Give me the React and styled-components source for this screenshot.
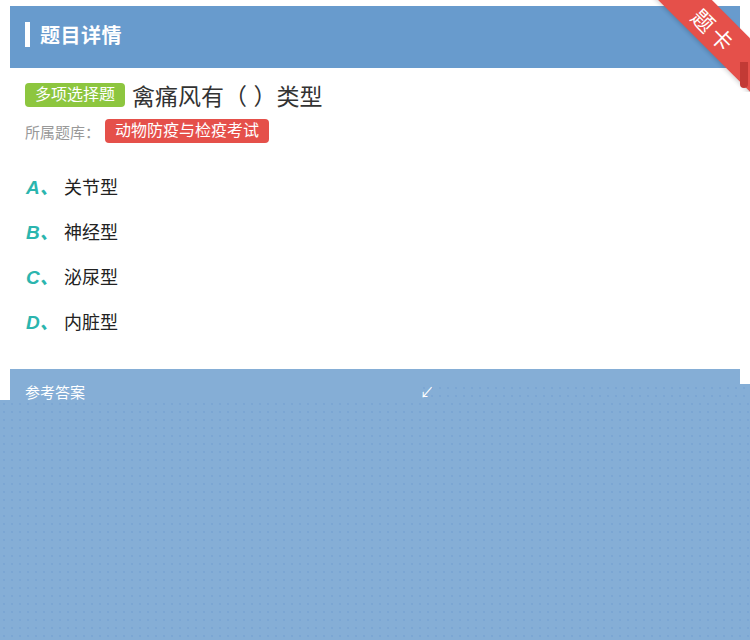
import React from 'react';
import styled, { createGlobalStyle } from 'styled-components';

const GlobalStyle = createGlobalStyle`
  html, body {
    margin: 0;
    padding: 0;
    background: #ffffff;
    font-family: "Liberation Sans", "Noto Sans CJK SC", sans-serif;
  }
`;

const Page = styled.div`
  position: relative;
  width: 750px;
  height: 640px;
  overflow: hidden;
  padding: 6px 10px 0;
  box-sizing: border-box;
`;

const Header = styled.div`
  height: 62px;
  background: #689bcd;
  display: flex;
  align-items: center;
  padding: 0 0 6px 15px;
  box-sizing: border-box;
  gap: 10px;
`;

const HeaderBar = styled.span`
  width: 5px;
  height: 25px;
  background: #ffffff;
`;

const HeaderTitle = styled.h2`
  margin: 0;
  color: #ffffff;
  font-size: 20px;
  font-weight: bold;
  letter-spacing: 0.5px;
`;

const Ribbon = styled.div`
  position: absolute;
  top: 0;
  right: 0;
  width: 100px;
  height: 92px;
  overflow: hidden;
  pointer-events: none;
`;

const RibbonBand = styled.div`
  position: absolute;
  left: -10px;
  top: 11px;
  width: 150px;
  height: 38px;
  background: #e5504a;
  transform: rotate(45deg);
  display: flex;
  align-items: center;
  justify-content: center;
  color: #ffffff;
  font-size: 22px;
  letter-spacing: 4px;
  box-shadow: 0 2px 4px rgba(0, 0, 0, 0.15);
`;

const RibbonFold = styled.div`
  position: absolute;
  right: 2px;
  top: 62px;
  width: 8px;
  height: 26px;
  background: #c23a35;
  border-radius: 0 0 4px 4px;
`;

const Body = styled.div`
  padding: 12px 15px 0;
`;

const QuestionRow = styled.div`
  display: flex;
  align-items: center;
  gap: 7px;
  height: 30px;
`;

const Tag = styled.span`
  display: inline-flex;
  align-items: center;
  height: 24px;
  padding: 0 10px;
  border-radius: 4px;
  background: ${p => p.$color};
  color: #ffffff;
  font-size: 16px;
  line-height: 24px;
`;

const QuestionText = styled.span`
  font-size: 23px;
  color: #333333;
`;

const BankRow = styled.div`
  display: flex;
  align-items: center;
  gap: 5px;
  margin-top: 9px;
  height: 24px;
  color: #999999;
  font-size: 15px;
`;

const Options = styled.ul`
  list-style: none;
  margin: 20px 0 0;
  padding: 0;
  display: flex;
  flex-direction: column;
`;

const Option = styled.li`
  display: flex;
  align-items: center;
  height: 45px;
  font-size: 18px;
  color: #222222;
`;

const Letter = styled.span`
  width: 38px;
  padding-left: 1px;
  color: #2bb5ae;
  font-weight: bold;
  font-style: italic;
  font-size: 19px;
`;

const AnswerBar = styled.div`
  margin-top: 26px;
  height: 60px;
  background: #85aed6;
  padding: 12px 15px;
  box-sizing: border-box;
  color: #ffffff;
  font-size: 15px;
`;

const Mask = styled.div`
  position: absolute;
  left: ${p => p.$left}px;
  top: ${p => p.$top}px;
  right: 0;
  bottom: 0;
  background-color: #85aed6;
  background-image: radial-gradient(circle, rgba(90, 140, 200, 0.22) 0.7px, transparent 1.1px);
  background-size: 8px 8px;
`;

const Mark = styled.span`
  position: absolute;
  left: 0;
  top: -3px;
  color: #ffffff;
  font-size: 14px;
`;

const options = [
  { key: 'A', text: '关节型' },
  { key: 'B', text: '神经型' },
  { key: 'C', text: '泌尿型' },
  { key: 'D', text: '内脏型' },
];

export default function App() {
  return (
    <>
      <GlobalStyle />
      <Page>
        <Header>
          <HeaderBar />
          <HeaderTitle>题目详情</HeaderTitle>
        </Header>
        <Body>
          <QuestionRow>
            <Tag $color="#8dc63f">多项选择题</Tag>
            <QuestionText>禽痛风有（ ）类型</QuestionText>
          </QuestionRow>
          <BankRow>
            <span>所属题库：</span>
            <Tag $color="#e5504a">动物防疫与检疫考试</Tag>
          </BankRow>
          <Options>
            {options.map(o => (
              <Option key={o.key}>
                <Letter>{o.key}、</Letter>
                {o.text}
              </Option>
            ))}
          </Options>
        </Body>
        <AnswerBar>参考答案</AnswerBar>
        <Mask $left={420} $top={384}>
          <Mark>↙</Mark>
        </Mask>
        <Mask $left={0} $top={400} />
        <Ribbon>
          <RibbonBand>题卡</RibbonBand>
          <RibbonFold />
        </Ribbon>
      </Page>
    </>
  );
}
